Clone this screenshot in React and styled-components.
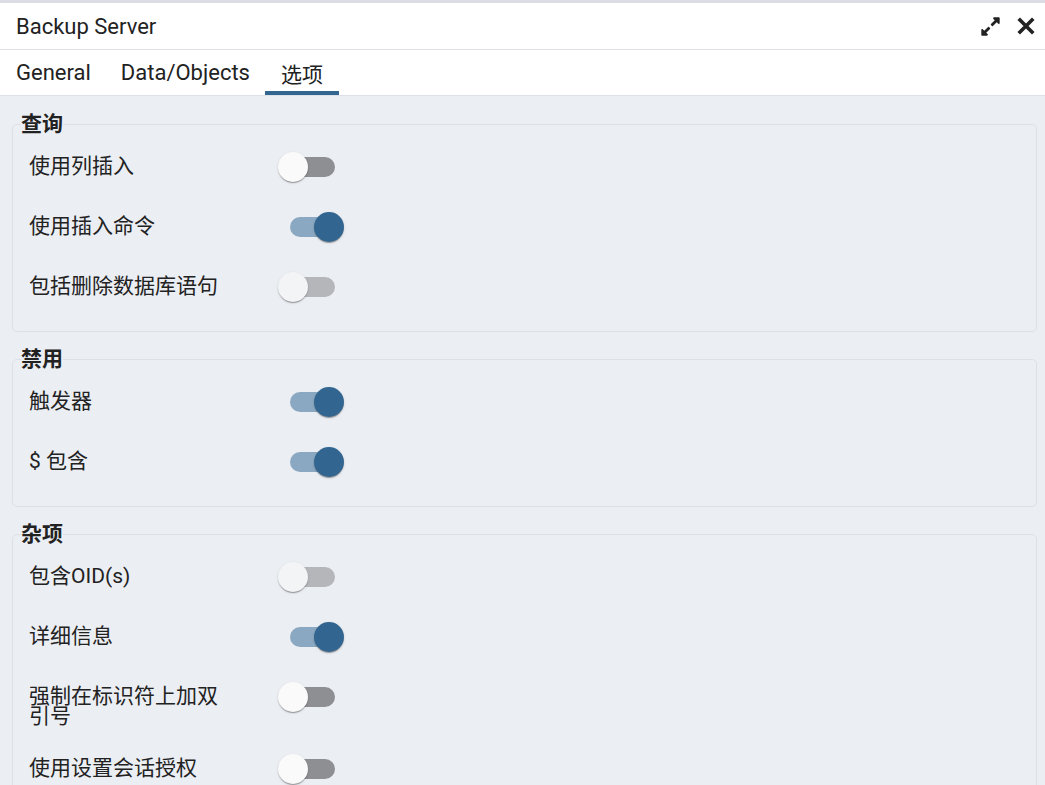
import React from 'react';
import styled, { createGlobalStyle } from 'styled-components';
import { FaExpandAlt } from 'react-icons/fa';

const GlobalStyle = createGlobalStyle`
  html, body {
    margin: 0;
    padding: 0;
    background: #ebeef3;
  }
  body {
    font-family: Roboto, "Noto Sans CJK SC", sans-serif;
    color: #222;
  }
`;

const sections = [
  {
    title: '查询',
    rows: [
      { label: '使用列插入', on: false },
      { label: '使用插入命令', on: true },
      { label: '包括删除数据库语句', on: false, muted: true },
    ],
  },
  {
    title: '禁用',
    rows: [
      { label: '触发器', on: true },
      { label: '$ 包含', on: true },
    ],
  },
  {
    title: '杂项',
    rows: [
      { label: '包含OID(s)', on: false, muted: true },
      { label: '详细信息', on: true },
      { label: '强制在标识符上加双引号', on: false },
      { label: '使用设置会话授权', on: false },
    ],
  },
];

const CloseIcon = () => (
  <svg width="18" height="18" viewBox="0 0 18 18">
    <path d="M3 3L15 15M15 3L3 15" stroke="#222" strokeWidth="3.6" strokeLinecap="square" />
  </svg>
);

const Toggle = ({ on, muted }) => (
  <SwitchRoot>
    <Track on={on ? 1 : 0} muted={muted ? 1 : 0} />
    <Thumb on={on ? 1 : 0} muted={muted ? 1 : 0} />
  </SwitchRoot>
);

const App = () => {
  return (
    <>
      <GlobalStyle />
      <Dialog>
        <Header>
          <Title>Backup Server</Title>
          <HeaderActions>
            <IconButton><FaExpandAlt size={21} color="#222" /></IconButton>
            <IconButton><CloseIcon /></IconButton>
          </HeaderActions>
        </Header>
        <Tabs>
          <Tab>General</Tab>
          <Tab>Data/Objects</Tab>
          <Tab active cjk>选项</Tab>
        </Tabs>
        <Content>
          {sections.map((s) => (
            <Group key={s.title}>
              <Legend>{s.title}</Legend>
              {s.rows.map((r) => (
                <Row key={r.label}>
                  <Label>{r.label}</Label>
                  <Toggle on={r.on} muted={r.muted} />
                </Row>
              ))}
            </Group>
          ))}
        </Content>
      </Dialog>
    </>
  );
};

const Dialog = styled.div`
  width: 1045px;
  height: 785px;
  overflow: hidden;
  border-top: 3px solid #dadde3;
  box-sizing: border-box;
  background: #ebeef3;
`;

const Header = styled.div`
  height: 47px;
  background: #fff;
  border-bottom: 1px solid #dde0e6;
  display: flex;
  align-items: center;
  justify-content: space-between;
  padding: 0 10px 0 16px;
  box-sizing: border-box;
`;

const Title = styled.div`
  font-size: 22px;
  color: #222;
`;

const HeaderActions = styled.div`
  display: flex;
  align-items: center;
  gap: 16px;
`;

const IconButton = styled.span`
  display: flex;
  align-items: center;
  justify-content: center;
  height: 24px;
`;

const Tabs = styled.div`
  height: 46px;
  background: #fff;
  border-bottom: 1px solid #dde0e6;
  display: flex;
  box-sizing: border-box;
  padding-left: 1px;
`;

const Tab = styled.div`
  padding: 4px ${(p) => (p.cjk ? '16px' : '15px')} 0;
  font-size: ${(p) => (p.cjk ? '21px' : '22px')};
  color: #222;
  display: flex;
  align-items: center;
  border-bottom: 4px solid ${(p) => (p.active ? '#326690' : 'transparent')};
`;

const Content = styled.div`
  padding: 17px 8px 0 12px;
`;

const Group = styled.fieldset`
  margin: 0 0 16px 0;
  padding: 2px 8px 14px 8px;
  border: 1px solid #dde1e7;
  border-radius: 5px;
  min-width: 0;
`;

const Legend = styled.legend`
  padding: 0;
  font-size: 21px;
  font-weight: 700;
  line-height: 22px;
  color: #222;
`;

const Row = styled.div`
  display: flex;
  align-items: flex-start;
  padding: 6px 0 6px 8px;
`;

const Label = styled.div`
  flex: 0 0 200px;
  font-size: 21px;
  line-height: 20px;
  padding: 13px 0 7px;
  color: #222;
`;

const SwitchRoot = styled.div`
  position: relative;
  flex: 0 0 66px;
  height: 48px;
  margin-left: 49px;
`;

const Track = styled.div`
  position: absolute;
  left: 12px;
  top: 14px;
  width: 45px;
  height: 20px;
  border-radius: 10px;
  background: ${(p) => (p.on ? '#8aa8c1' : p.muted ? '#b4b6ba' : '#8e8f93')};
`;

const Thumb = styled.div`
  position: absolute;
  top: 9px;
  left: ${(p) => (p.on ? '36px' : '0')};
  width: 30px;
  height: 30px;
  border-radius: 50%;
  background: ${(p) => (p.on ? '#326690' : p.muted ? '#f3f4f6' : '#fafafa')};
  box-shadow: 0 2px 1px -1px rgba(0,0,0,0.2), 0 1px 1px 0 rgba(0,0,0,0.14), 0 1px 3px 0 rgba(0,0,0,0.12);
`;

export default App;
